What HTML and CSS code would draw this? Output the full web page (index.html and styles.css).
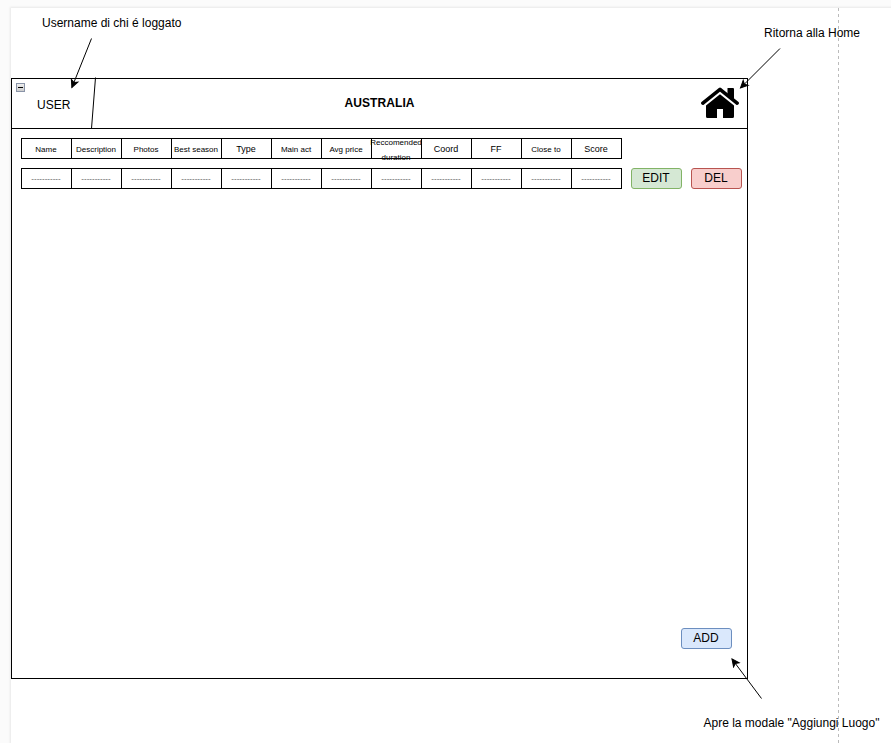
FILE: index.html
```html
<!DOCTYPE html>
<html lang="it">
<head>
<meta charset="utf-8">
<title>Australia</title>
<link rel="stylesheet" href="styles.css">
</head>
<body>
<main class="sheet">
  <section class="window">
    <header class="titlebar">
      <span class="collapse"></span>
      <span class="user">USER</span>
      <h1 class="title">AUSTRALIA</h1>
      <svg class="home" width="38" height="32" viewBox="0 0 38 32">
        <path d="M19 7.200 33 18.500V29.500Q33 31 31.500 31H22V22H16V31H6.500Q5 31 5 29.500V18.500Z"/>
        <path class="gap" d="M1.900 16.200 19 2.400 36.100 16.200"/>
        <path d="M26.500 1H32Q33 1 33 2V13L26.500 8Z"/>
        <path class="roof" d="M1.900 16.200 19 2.400 36.100 16.200"/>
      </svg>
    </header>
    <div class="content">
      <div class="row head">
        <span class="cell">Name</span><span class="cell">Description</span><span class="cell">Photos</span><span class="cell">Best season</span><span class="cell big">Type</span><span class="cell">Main act</span><span class="cell">Avg price</span><span class="cell">Reccomended duration</span><span class="cell big">Coord</span><span class="cell big">FF</span><span class="cell">Close to</span><span class="cell big">Score</span>
      </div>
      <div class="line">
        <div class="row data">
          <span class="cell">-----------</span><span class="cell">-----------</span><span class="cell">-----------</span><span class="cell">-----------</span><span class="cell">-----------</span><span class="cell">-----------</span><span class="cell">-----------</span><span class="cell">-----------</span><span class="cell">-----------</span><span class="cell">-----------</span><span class="cell">-----------</span><span class="cell">-----------</span>
        </div>
        <button class="btn edit">EDIT</button>
        <button class="btn del">DEL</button>
      </div>
      <button class="btn add">ADD</button>
    </div>
  </section>
</main>
<div class="pagebreak"></div>
<p class="note note-user">Username di chi é loggato</p>
<p class="note note-home">Ritorna alla Home</p>
<p class="note note-add">Apre la modale "Aggiungi Luogo"</p>
<svg class="arrows" width="891" height="743" viewBox="0 0 891 743">
  <defs>
    <marker id="tip" markerUnits="userSpaceOnUse" markerWidth="11" markerHeight="11" refX="8.500" refY="5" orient="auto">
      <path d="M8.500 5 1.200 8.500 3 5 1.200 1.500Z"/>
    </marker>
  </defs>
  <path d="M91.500 38.500 71.900 87.500" marker-end="url(#tip)"/>
  <path d="M780 48.500 740.500 88" marker-end="url(#tip)"/>
  <path d="M761.500 698.500 732 659" marker-end="url(#tip)"/>
  <path d="M95.500 77.500 91.500 128.500"/>
</svg>
</body>
</html>
```

FILE: styles.css
```css
* { box-sizing: border-box; }
body {
  margin: 0;
  height: 743px;
  padding: 8px 0 0 11px;
  overflow: hidden;
  position: relative;
  background: #fbfbfb;
  font-family: "Liberation Sans", Arial, sans-serif;
  font-size: 12px;
  color: #000;
}
.sheet {
  height: 735px;
  padding-top: 70px;
  background: #fff;
  box-shadow: 0 0 2px 1px #e8e8e8;
}
.window {
  width: 737px;
  height: 601px;
  border: 1px solid #000;
  display: flex;
  flex-direction: column;
}
.titlebar {
  position: relative;
  height: 50px;
  flex: none;
  border-bottom: 1px solid #000;
  display: grid;
  grid-template-columns: 1fr auto 1fr;
  align-items: center;
  padding: 0 8px 0 11px;
}
.collapse {
  position: absolute;
  left: 4px;
  top: 4px;
  width: 9px;
  height: 9px;
  border: 1px solid #8a94a8;
  background: linear-gradient(#000, #000) center / 5px 1px no-repeat, linear-gradient(#eee, #ccc);
}
.user { padding: 3px 0 0 14px; }
.title { margin: 0 3px 1px 0; font-size: 12px; letter-spacing: 0.1px; }
.home { display: block; margin-bottom: 1px; justify-self: end; }
.roof, .gap { fill: none; stroke-linecap: round; stroke-linejoin: round; }
.roof { stroke: #000; stroke-width: 3.6; }
.gap { stroke: #fff; stroke-width: 5.6; }
.content {
  flex: 1;
  display: flex;
  flex-direction: column;
  gap: 9px;
  padding: 9px 5px 29px 9px;
}
.line { display: flex; gap: 9px; }
.row {
  display: grid;
  grid-template-columns: repeat(12, 50px);
  width: 601px;
  height: 21px;
  border: 1px solid #000;
  border-left: 0;
}
.cell {
  display: flex;
  align-items: center;
  justify-content: center;
  border-left: 1px solid #000;
  height: 19px;
  font-size: 8px;
  line-height: 15px;
  text-align: center;
  padding: 2px 1px 0 0;
}
.cell.big { font-size: 9px; }
.data .cell { color: #555; padding: 0 1px 1px 0; }
.btn {
  width: 51px;
  height: 21px;
  padding: 0 1px 2px 0;
  border: 1px solid;
  border-radius: 3px;
  font: 12px "Liberation Sans", Arial, sans-serif;
  color: #000;
}
.edit { background: #d5e8d4; border-color: #82b366; }
.del { background: #f8cecc; border-color: #b85450; }
.add { background: #dae8fc; border-color: #6c8ebf; margin: auto 10px 0 auto; }
.note { position: absolute; margin: 0; line-height: 14px; white-space: nowrap; }
.note-user { left: 42px; top: 16px; }
.note-home { left: 764px; top: 26px; }
.note-add { left: 703.5px; top: 716px; }
.pagebreak {
  position: absolute;
  left: 838px;
  top: 8px;
  width: 1px;
  bottom: 0;
  background: repeating-linear-gradient(#bbb 0 3px, transparent 3px 6px);
}
.arrows { position: absolute; left: 0; top: 0; fill: none; stroke: #000; stroke-width: 1; }
.arrows marker path { fill: #000; stroke: #000; stroke-width: 1; }
```
